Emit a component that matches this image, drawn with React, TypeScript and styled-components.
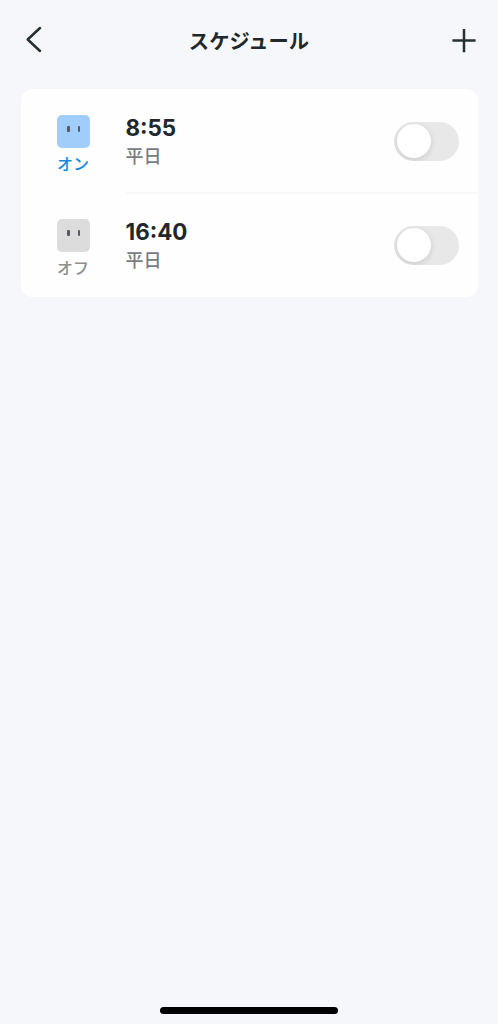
import React, { useState } from 'react';
import styled, { createGlobalStyle } from 'styled-components';

const GlobalStyle = createGlobalStyle`
  * { box-sizing: border-box; }
  body {
    margin: 0;
    background: #f5f7fb;
    font-family: Inter, "Noto Sans CJK JP", sans-serif;
    color: #20282b;
  }
`;

const Screen = styled.div`
  width: 100%;
  max-width: 498px;
  height: 1024px;
  display: flex;
  flex-direction: column;
  background: #f5f7fb;
`;

const Header = styled.header`
  height: 89px;
  padding: 22px 15px 0 15px;
  display: grid;
  grid-template-columns: 38px 1fr 38px;
  align-items: start;
`;

const IconButton = styled.button`
  width: 38px;
  height: 38px;
  padding: 0;
  border: 0;
  background: none;
  color: #263034;
  svg { display: block; }
`;

const Title = styled.h1`
  margin: 0;
  font-family: "Noto Sans CJK JP", sans-serif;
  font-size: 20.3px;
  line-height: 36px;
  font-weight: 700;
  text-align: center;
  white-space: nowrap;
`;

const Card = styled.ul`
  list-style: none;
  margin: 0 20px 0 20.5px;
  padding: 0;
  border-radius: 12px;
  background: #fefefe;
  overflow: hidden;
`;

const Row = styled.li`
  height: 104px;
  display: flex;
  padding-left: 27px;
`;

const Device = styled.div`
  width: 51px;
  padding-top: 26px;
  display: flex;
  flex-direction: column;
  align-items: center;
`;

const Tile = styled.div<{ $on: boolean }>`
  width: 33px;
  height: 32.5px;
  border-radius: 5px;
  display: flex;
  justify-content: center;
  gap: 8px;
  padding: 10.5px 0 0 1px;
  background: ${(p) => (p.$on ? '#a0cdfb' : '#dcdcdc')};
`;

const Eye = styled.span`
  width: 2.4px;
  height: 6.5px;
  border-radius: 1px;
  background: #555b60;
`;

const State = styled.span<{ $on: boolean }>`
  margin-top: 3.5px;
  font-family: "Noto Sans CJK JP", sans-serif;
  font-size: 16px;
  line-height: 24px;
  font-weight: 500;
  color: ${(p) => (p.$on ? '#0d8ae6' : '#8c8e8f')};
`;

const Details = styled.div<{ $divider: boolean }>`
  flex: 1;
  height: 105px;
  margin-left: 27px;
  padding: 25px 19px 0 0;
  display: flex;
  justify-content: space-between;
  border-bottom: ${(p) => (p.$divider ? '2px solid #f8f8f9' : '0')};
`;

const Time = styled.div`
  font-size: 22.4px;
  line-height: 28px;
  font-weight: 650;
`;

const Repeat = styled.div`
  font-family: "Noto Sans CJK JP", sans-serif;
  font-size: 18px;
  line-height: 26px;
  font-weight: 500;
  color: #777c7e;
`;

const Toggle = styled.button<{ $on: boolean }>`
  width: 65px;
  height: 39px;
  margin-top: 7.5px;
  padding: 2.5px;
  border: 0;
  border-radius: 20px;
  display: flex;
  justify-content: ${(p) => (p.$on ? 'flex-end' : 'flex-start')};
  background: ${(p) => (p.$on ? '#0d8ae6' : '#e8e8e8')};
  overflow: hidden;
`;

const Knob = styled.span`
  width: 34px;
  height: 34px;
  border-radius: 50%;
  background: #fff;
  box-shadow: 0 2px 6px rgba(0, 0, 0, 0.13);
`;

const Footer = styled.footer`
  margin-top: auto;
  padding-bottom: 10px;
  display: flex;
  justify-content: center;
`;

const HomeBar = styled.div`
  width: 178px;
  height: 7px;
  border-radius: 4px;
  background: #000;
`;

const schedules = [
  { time: '8:55', repeat: '平日', turnsOn: true },
  { time: '16:40', repeat: '平日', turnsOn: false },
];

function ScheduleRow({ time, repeat, turnsOn, divider }: {
  time: string; repeat: string; turnsOn: boolean; divider: boolean;
}) {
  const [enabled, setEnabled] = useState(false);
  return (
    <Row>
      <Device>
        <Tile $on={turnsOn}><Eye /><Eye /></Tile>
        <State $on={turnsOn}>{turnsOn ? 'オン' : 'オフ'}</State>
      </Device>
      <Details $divider={divider}>
        <div>
          <Time>{time}</Time>
          <Repeat>{repeat}</Repeat>
        </div>
        <Toggle
          $on={enabled}
          role="switch"
          aria-checked={enabled}
          aria-label={time}
          onClick={() => setEnabled(!enabled)}
        >
          <Knob />
        </Toggle>
      </Details>
    </Row>
  );
}

export default function App() {
  return (
    <>
      <GlobalStyle />
      <Screen>
        <Header>
          <IconButton aria-label="戻る">
            <svg width="38" height="38" fill="none" stroke="currentColor" strokeWidth="2.5" strokeLinecap="round" strokeLinejoin="round">
              <path d="M25 6 L12.7 17.5 L25 29" />
            </svg>
          </IconButton>
          <Title>スケジュール</Title>
          <IconButton aria-label="追加">
            <svg width="38" height="38" fill="none" stroke="currentColor" strokeWidth="2.5" strokeLinecap="butt">
              <path d="M19 7 V30.2 M7.4 18.6 H30.6" />
            </svg>
          </IconButton>
        </Header>
        <Card>
          {schedules.map((s, i) => (
            <ScheduleRow key={s.time} {...s} divider={i < schedules.length - 1} />
          ))}
        </Card>
        <Footer><HomeBar /></Footer>
      </Screen>
    </>
  );
}
